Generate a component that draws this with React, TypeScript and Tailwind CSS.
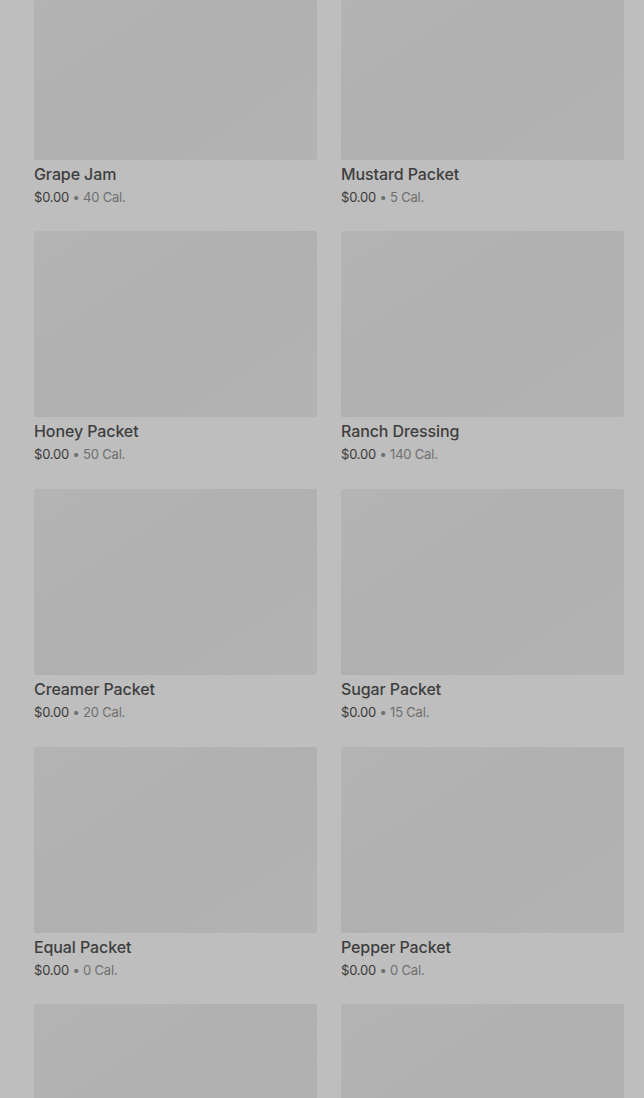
import React from 'react';

interface Item {
  name: string;
  price: string;
  cal: number;
}

const items: Item[] = [
  { name: 'Grape Jam', price: '$0.00', cal: 40 },
  { name: 'Mustard Packet', price: '$0.00', cal: 5 },
  { name: 'Honey Packet', price: '$0.00', cal: 50 },
  { name: 'Ranch Dressing', price: '$0.00', cal: 140 },
  { name: 'Creamer Packet', price: '$0.00', cal: 20 },
  { name: 'Sugar Packet', price: '$0.00', cal: 15 },
  { name: 'Equal Packet', price: '$0.00', cal: 0 },
  { name: 'Pepper Packet', price: '$0.00', cal: 0 },
];

const Thumb: React.FC = () => (
  <div className="h-[186px] rounded-[2px] bg-gradient-to-br from-[#b4b4b4] via-[#b0b0b0] to-[#b3b3b3]"></div>
);

const App: React.FC = () => {
  return (
    <div
      className="w-[644px] h-[1098px] overflow-hidden bg-[#bebebe]"
      style={{ fontFamily: 'Inter, "Noto Sans", sans-serif' }}
    >
      <div className="-mt-[26.5px] grid grid-cols-2 gap-x-6 gap-y-[25.7px] pl-[34px] pr-5">
        {items.map((item, idx) => (
          <div key={idx} className="flex flex-col">
            <Thumb />
            <div className="mt-1 h-5 text-[16px] leading-5 font-medium text-[#3e3e3e] tracking-[-0.1px]">
              {item.name}
            </div>
            <div className="mt-1 h-[18px] text-[13px] leading-[18px] text-[#3a3a3a] tracking-[-0.2px]">
              {item.price}
              <span className="text-[#6f6f6f]"> • {item.cal} Cal.</span>
            </div>
          </div>
        ))}
        {/* next row, only the thumbnails are in view */}
        <div className="flex flex-col">
          <Thumb />
        </div>
        <div className="flex flex-col">
          <Thumb />
        </div>
      </div>
    </div>
  );
};

export default App;
